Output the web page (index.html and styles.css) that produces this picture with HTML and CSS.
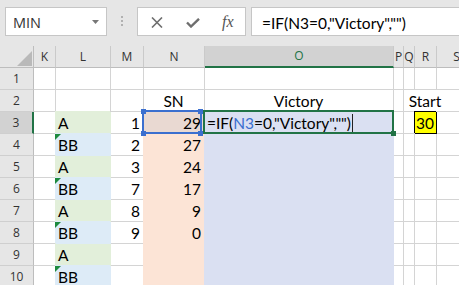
FILE: index.html
```html
<!DOCTYPE html>
<html lang="en">
<head>
  <meta charset="UTF-8" />
  <title>Victory - Excel</title>
  <link rel="stylesheet" href="styles.css">
</head>
<body>

<div class="toolbar">
  <div class="namebox">
    <span>MIN</span>
    <svg width="7" height="4" viewBox="0 0 7 4"><path d="M0 0h7L3.5 4z" fill="#777"/></svg>
  </div>
  <div class="grip"><i></i><i></i><i></i></div>
  <div class="fxbox">
    <svg class="ico-x" width="12" height="11" viewBox="0 0 12 11"><path d="M1 0.5l10 10M11 0.5l-10 10" stroke="#6e6e6e" stroke-width="1.6" fill="none"/></svg>
    <svg class="ico-ok" width="14" height="10" viewBox="0 0 14 10"><path d="M1 4.5l4 4L13 0.8" stroke="#6e6e6e" stroke-width="2.4" fill="none"/></svg>
    <span class="fx">fx</span>
  </div>
  <div class="formula">=IF(N3=0,"Victory","")</div>
</div>

<div class="sheet">
  <!-- column headers -->
  <div class="cell hd corner"><svg width="15" height="15" viewBox="0 0 15 15"><path d="M15 0v15H0z" fill="#b9b9b9"/></svg></div>
  <div class="cell hd">K</div>
  <div class="cell hd">L</div>
  <div class="cell hd">M</div>
  <div class="cell hd">N</div>
  <div class="cell hd hd-sel">O</div>
  <div class="cell hd">P</div>
  <div class="cell hd">Q</div>
  <div class="cell hd">R</div>
  <div class="cell hd">S</div>

  <!-- 1 -->
  <div class="cell rh">1</div>
  <div class="cell"></div><div class="cell"></div><div class="cell"></div><div class="cell"></div>
  <div class="cell"></div><div class="cell"></div><div class="cell"></div><div class="cell"></div><div class="cell"></div>

  <!-- 2 -->
  <div class="cell rh">2</div>
  <div class="cell"></div><div class="cell"></div><div class="cell"></div>
  <div class="cell ctr">SN</div>
  <div class="cell ctr">Victory</div>
  <div class="cell"></div>
  <div class="cell spill"></div>
  <div class="cell ctr spill">Start</div>
  <div class="cell"></div>

  <!-- 3 -->
  <div class="cell rh rh-sel">3</div>
  <div class="cell"></div>
  <div class="cell g">A</div>
  <div class="cell num">1</div>
  <div class="cell num o-ref">29<i class="refbox"></i><i class="refdot"></i></div>
  <div class="cell v active"><span>=IF(<span class="ref-t">N3</span>=0,"Victory","")</span><i class="caret"></i><i class="actbox"></i><i class="handle"></i></div>
  <div class="cell"></div><div class="cell"></div>
  <div class="cell ctr y">30</div>
  <div class="cell"></div>

  <!-- 4 -->
  <div class="cell rh">4</div>
  <div class="cell"></div>
  <div class="cell b err">BB</div>
  <div class="cell num">2</div>
  <div class="cell num o">27</div>
  <div class="cell v"></div>
  <div class="cell"></div><div class="cell"></div><div class="cell"></div><div class="cell"></div>

  <!-- 5 -->
  <div class="cell rh">5</div>
  <div class="cell"></div>
  <div class="cell g">A</div>
  <div class="cell num">3</div>
  <div class="cell num o">24</div>
  <div class="cell v"></div>
  <div class="cell"></div><div class="cell"></div><div class="cell"></div><div class="cell"></div>

  <!-- 6 -->
  <div class="cell rh">6</div>
  <div class="cell"></div>
  <div class="cell b err">BB</div>
  <div class="cell num">7</div>
  <div class="cell num o">17</div>
  <div class="cell v"></div>
  <div class="cell"></div><div class="cell"></div><div class="cell"></div><div class="cell"></div>

  <!-- 7 -->
  <div class="cell rh">7</div>
  <div class="cell"></div>
  <div class="cell g">A</div>
  <div class="cell num">8</div>
  <div class="cell num o">9</div>
  <div class="cell v"></div>
  <div class="cell"></div><div class="cell"></div><div class="cell"></div><div class="cell"></div>

  <!-- 8 -->
  <div class="cell rh">8</div>
  <div class="cell"></div>
  <div class="cell b err">BB</div>
  <div class="cell num">9</div>
  <div class="cell num o">0</div>
  <div class="cell v"></div>
  <div class="cell"></div><div class="cell"></div><div class="cell"></div><div class="cell"></div>

  <!-- 9 -->
  <div class="cell rh">9</div>
  <div class="cell"></div>
  <div class="cell g">A</div>
  <div class="cell"></div>
  <div class="cell o"></div>
  <div class="cell v"></div>
  <div class="cell"></div><div class="cell"></div><div class="cell"></div><div class="cell"></div>

  <!-- 10 -->
  <div class="cell rh">10</div>
  <div class="cell"></div>
  <div class="cell b err">BB</div>
  <div class="cell"></div>
  <div class="cell o"></div>
  <div class="cell v"></div>
  <div class="cell"></div><div class="cell"></div><div class="cell"></div><div class="cell"></div>
</div>

</body>
</html>
```

FILE: styles.css
```css
* {
  box-sizing: border-box;
}
body {
  margin: 0;
  width: 459px;
  height: 285px;
  overflow: hidden;
  background: #fff;
  font-family: "Lato", "Liberation Sans", sans-serif;
  color: #000;
}

/* formula bar */
.toolbar {
  height: 46px;
  background: #e6e6e6;
  display: flex;
  align-items: flex-start;
  padding-top: 7px;
}
.namebox {
  margin-left: 5px;
  width: 102px;
  height: 29px;
  background: #fff;
  border: 1px solid #c6c6c6;
  display: flex;
  align-items: center;
  justify-content: space-between;
  padding: 2px 7px 0 7px;
  font-family: "Open Sans", sans-serif;
  font-size: 14.5px;
  color: #333;
}
.namebox svg {
  margin-top: -2px;
}
.grip {
  margin: 9px 0 0 14px;
  display: flex;
  flex-direction: column;
  gap: 2px;
}
.grip i {
  width: 2px;
  height: 2px;
  background: #b1b1b1;
}
.fxbox {
  margin-left: 14px;
  width: 109px;
  height: 29px;
  background: #fff;
  border: 1px solid #c6c6c6;
  display: flex;
  align-items: center;
}
.ico-x {
  margin-left: 13px;
  margin-top: 2px;
}
.ico-ok {
  margin-left: 23px;
  margin-top: 3px;
}
.fx {
  margin-left: 22px;
  font-family: "Liberation Serif", serif;
  font-style: italic;
  font-size: 16px;
  color: #555;
}
.formula {
  margin-left: 5px;
  flex: 1;
  height: 29px;
  background: #fff;
  border: 1px solid #c6c6c6;
  border-right: none;
  display: flex;
  align-items: center;
  padding: 2px 0 0 10px;
  font-size: 15.5px;
  white-space: nowrap;
}

/* grid */
.sheet {
  display: grid;
  grid-template-columns: 34px 22px 55px 33px 61px 189px 10px 11px 22px 40px;
  grid-auto-rows: 22px;
}
.cell {
  display: flex;
  align-items: flex-end;
  padding: 0 3px 1px 2px;
  border-right: 1px solid #d4d4d4;
  border-bottom: 1px solid #d4d4d4;
  font-size: 15.5px;
  line-height: 18px;
  white-space: nowrap;
}
.num {
  justify-content: flex-end;
}
.ctr {
  justify-content: center;
}
.spill {
  border-right-color: transparent;
}

.hd,
.rh {
  background: #e6e6e6;
  align-items: center;
  justify-content: center;
  padding: 0;
  font-family: "Open Sans", sans-serif;
  font-size: 12px;
  color: #333;
  border-right-color: #cacaca;
  border-bottom-color: #bdbdbd;
}
.rh {
  border-right-color: #bdbdbd;
  border-bottom-color: #cfcfcf;
}
.corner {
  justify-content: flex-end;
  align-items: flex-end;
  padding: 0 1px 1px 0;
  border-right-color: #bdbdbd;
}
.corner svg {
  display: block;
}
.hd-sel {
  background: #d2d2d2;
  color: #217346;
  border-bottom: 2px solid #217346;
}
.rh-sel {
  background: #d2d2d2;
  border-right: 2px solid #217346;
}

/* fills */
.g {
  background: #e2efda;
  border-color: #e2efda;
  box-shadow: -1px -1px 0 #e2efda;
}
.b {
  background: #ddebf7;
  border-color: #ddebf7;
  box-shadow: -1px -1px 0 #ddebf7;
}
.o {
  background: #fce4d6;
  border-color: #fce4d6;
  box-shadow: -1px -1px 0 #fce4d6;
}
.v {
  background: #dae0f2;
  border-color: #dae0f2;
  box-shadow: -1px -1px 0 #dae0f2;
}
.y {
  background: #ffff00;
  border-color: #000;
  box-shadow: -1px -1px 0 #000;
}

/* green "number stored as text" marker */
.err {
  position: relative;
}
.err::before {
  content: "";
  position: absolute;
  left: -1px;
  top: 0;
  border-top: 6px solid #1d8a3f;
  border-right: 6px solid transparent;
}

/* N3 referenced by the formula */
.o-ref {
  position: relative;
  background: #e9d9d2;
  border-color: #e9d9d2;
  box-shadow: -1px -1px 0 #e9d9d2;
}
.refbox {
  position: absolute;
  left: -2px;
  top: -2px;
  right: 2px;
  bottom: -1px;
  border: 2px solid #3b6fcf;
}
.refdot {
  position: absolute;
  left: -3px;
  top: -3px;
  width: 5px;
  height: 5px;
  background: #3b6fcf;
  box-shadow: 57px 0 #3b6fcf, 0 22px #3b6fcf, 57px 22px #3b6fcf;
}

/* O3 being edited */
.active {
  position: relative;
}
.ref-t {
  color: #3b6fcf;
}
.caret {
  width: 1px;
  height: 18px;
  margin-left: 1px;
  background: #222;
}
.actbox {
  position: absolute;
  left: -2px;
  top: -2px;
  right: -1px;
  bottom: -1px;
  border: 2px solid #217346;
}
.handle {
  position: absolute;
  right: -3px;
  bottom: -3px;
  width: 5px;
  height: 5px;
  background: #217346;
}
```
